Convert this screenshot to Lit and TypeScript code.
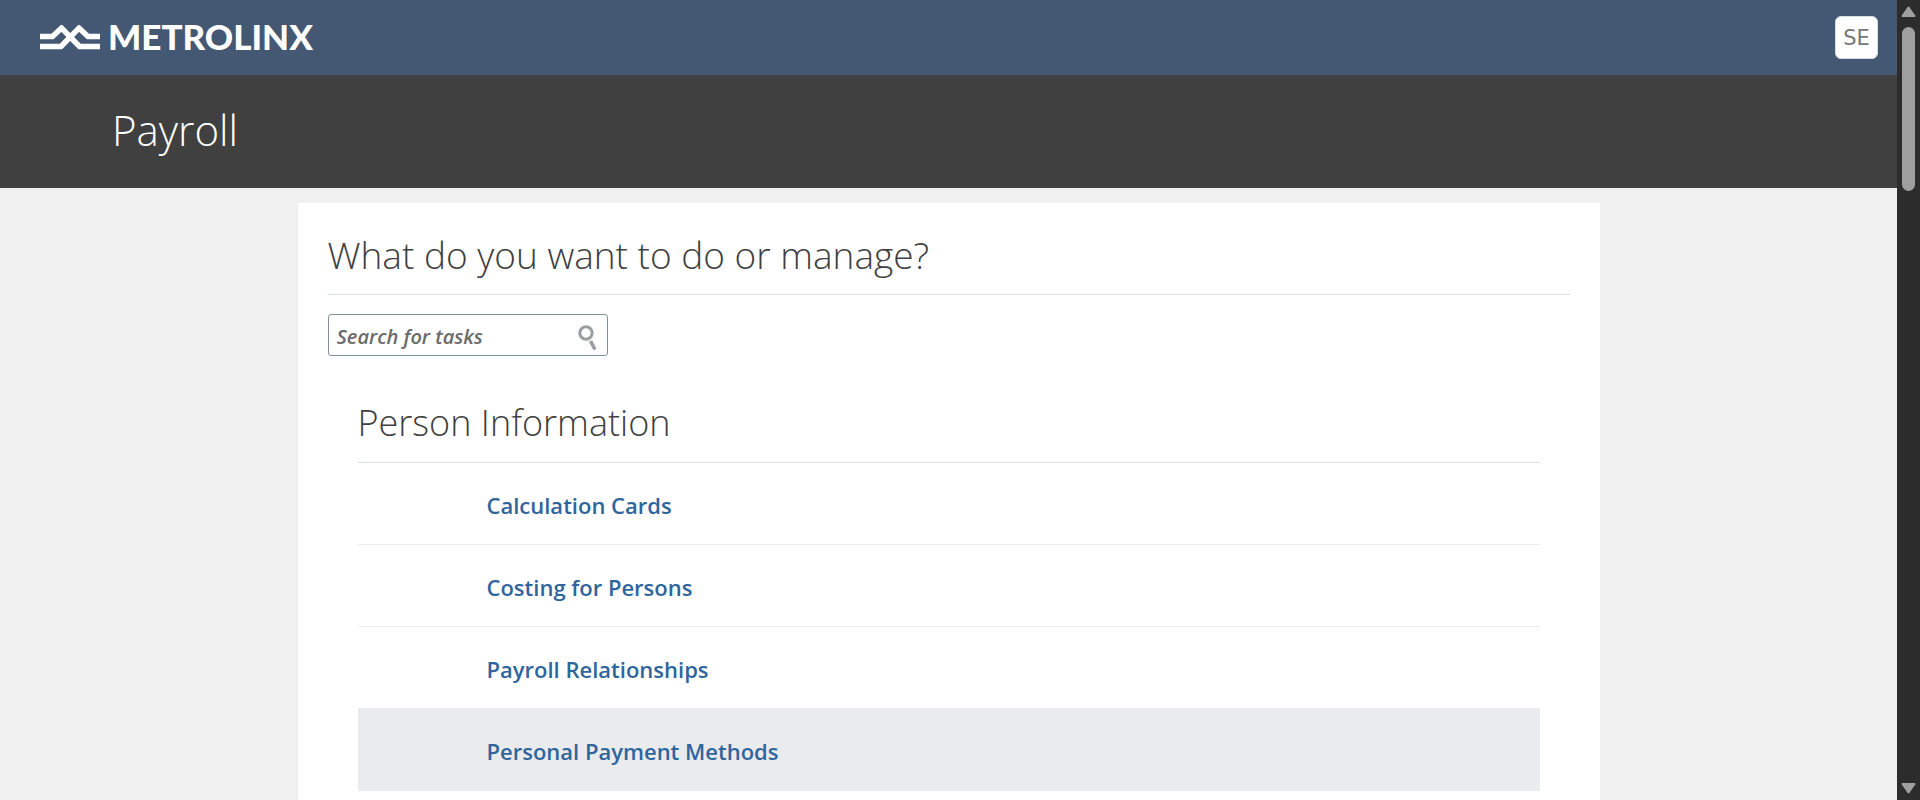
import { LitElement, html, css } from "lit";
import { customElement, state } from "lit/decorators.js";

@customElement("app-root")
export class AppRoot extends LitElement {
  @state() private tasks = [
    "Calculation Cards",
    "Costing for Persons",
    "Payroll Relationships",
    "Personal Payment Methods",
  ];

  @state() private active = 3;

  static styles = css`
    :host {
      display: grid;
      grid-template-columns: minmax(0, 1fr) 23px;
      height: 100vh;
      overflow: hidden;
      font-family: "Open Sans", "Segoe UI", sans-serif;
      color: #404040;
      background: #f0f0f0;
    }
    * {
      box-sizing: border-box;
    }
    .page {
      display: flex;
      flex-direction: column;
      min-width: 0;
      overflow: hidden;
    }
    .topbar {
      display: flex;
      flex: none;
      align-items: center;
      justify-content: space-between;
      height: 75px;
      padding: 0 19px 0 40px;
      background: #455873;
    }
    .brand {
      display: flex;
      align-items: center;
      gap: 8px;
      color: #fff;
      text-decoration: none;
      font: 900 35px/38px Lato, sans-serif;
    }
    .brand span {
      padding-bottom: 3px;
    }
    .mark {
      display: block;
      width: 60px;
      height: 26px;
    }
    .avatar {
      width: 43px;
      height: 43px;
      padding: 0;
      border: 1px solid #d6dfe6;
      border-radius: 6px;
      background: #fff;
      color: #777;
      font: 21px/40px "DejaVu Sans", sans-serif;
    }
    .titlebar {
      display: flex;
      flex: none;
      align-items: center;
      height: 113px;
      padding: 0 112px 3px;
      background: #404040;
      color: #fff;
    }
    h1,
    h2,
    h3 {
      margin: 0;
      font-weight: 300;
      line-height: 60px;
    }
    h1 {
      font-size: 42px;
    }
    h2 {
      padding-bottom: 9px;
      border-bottom: 1px solid #d6dfe6;
      font-size: 37px;
    }
    h3 {
      padding-bottom: 9px;
      border-bottom: 1px solid #d6dfe6;
      font-size: 36px;
    }
    .card {
      flex: 1 0 auto;
      width: 100%;
      max-width: 1302px;
      margin: 15px auto 0;
      padding: 22px 30px;
      background: #fff;
    }
    .search {
      display: flex;
      align-items: center;
      width: 280px;
      height: 42px;
      margin-top: 19px;
      padding: 0 8px;
      border: 1px solid #7b929f;
      border-radius: 3px;
    }
    .search input {
      flex: 1;
      min-width: 0;
      height: 100%;
      padding: 3px 0 0;
      border: 0;
      outline: 0;
      background: none;
      color: #333;
      font: italic 600 20px/28px "Open Sans", sans-serif;
    }
    .search input::placeholder {
      color: #6b6b6b;
      opacity: 1;
    }
    .go {
      display: block;
      padding: 0;
      border: 0;
      background: none;
    }
    .go svg {
      display: block;
    }
    .group {
      padding: 37px 30px 0;
    }
    ul {
      margin: 0;
      padding: 0;
      list-style: none;
    }
    li {
      display: flex;
      align-items: center;
      height: 82px;
      padding: 2px 129px 0;
      border-bottom: 1px solid #ebebeb;
    }
    li.active {
      background: #eaebed;
    }
    li a {
      color: #30659c;
      text-decoration: none;
      font-size: 22px;
      line-height: 32px;
      font-weight: 600;
    }
    .scrollbar {
      display: flex;
      flex-direction: column;
      align-items: center;
      padding: 6px 0;
      background: #2c2c2c;
    }
    .scrollbar svg {
      display: block;
      flex: none;
    }
    .track {
      flex: 1;
      width: 13px;
      margin: 9px 0;
    }
    .thumb {
      height: 22%;
      border-radius: 7px;
      background: #9f9f9f;
    }
  `;

  render() {
    return html`
      <div class="page">
        <header class="topbar">
          <a class="brand" href="#">
            <svg class="mark" viewBox="0 0 60 26" fill="none" stroke="#fff" stroke-width="5.400" aria-hidden="true">
              <path d="M0 11.500H12.500L21.500 3L39.500 21.500H60" />
              <path d="M0 21.500H21L39 3L48 11.500H60" />
            </svg>
            <span>METROLINX</span>
          </a>
          <button class="avatar" type="button" aria-label="User menu, SE">SE</button>
        </header>
        <div class="titlebar"><h1>Payroll</h1></div>
        <main class="card">
          <h2>What do you want to do or manage?</h2>
          <div class="search">
            <input type="text" placeholder="Search for tasks" aria-label="Search for tasks" />
            <button class="go" type="button" aria-label="Search">
              <svg width="24" height="30" viewBox="0 0 24 30" fill="none" stroke="#9a9ea1" aria-hidden="true">
                <circle cx="11" cy="13" r="6.200" stroke-width="3" />
                <path d="M15.500 21L20 29.500" stroke-width="3.600" />
              </svg>
            </button>
          </div>
          <section class="group">
            <h3>Person Information</h3>
            <ul>
              ${this.tasks.map(
                (task, i) => html`<li class=${i === this.active ? "active" : ""}>
                  <a href="#">${task}</a>
                </li>`
              )}
            </ul>
          </section>
        </main>
      </div>
      <div class="scrollbar" aria-hidden="true">
        <svg width="15" height="12" viewBox="0 0 15 12" fill="#9f9f9f" stroke="#9f9f9f" stroke-width="2" stroke-linejoin="round">
          <path d="M7.500 1.500L13.500 10H1.500Z" />
        </svg>
        <div class="track"><div class="thumb"></div></div>
        <svg width="15" height="12" viewBox="0 0 15 12" fill="#9f9f9f" stroke="#9f9f9f" stroke-width="2" stroke-linejoin="round">
          <path d="M7.500 10.500L13.500 2H1.500Z" />
        </svg>
      </div>
    `;
  }
}
